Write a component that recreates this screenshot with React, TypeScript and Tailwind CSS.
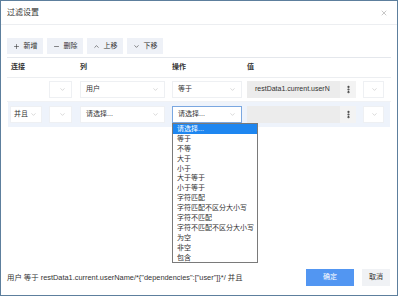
import { Plus, Minus, ChevronUp, ChevronDown, X, EllipsisVertical } from 'lucide-react';

const font = { fontFamily: '"Liberation Sans", "Noto Sans CJK SC", sans-serif' };

const ops = [
  '请选择...',
  '等于',
  '不等',
  '大于',
  '小于',
  '大于等于',
  '小于等于',
  '字符匹配',
  '字符匹配不区分大小写',
  '字符不匹配',
  '字符不匹配不区分大小写',
  '为空',
  '非空',
  '包含',
];

function Select({ label = '', className = '', focus = false }: { label?: string; className?: string; focus?: boolean }) {
  return (
    <div
      className={`flex items-center justify-between h-[17px] bg-white px-[5px] text-[7px] text-[#333] border ${
        focus ? 'border-[#7aa7e0]' : 'border-[#eef0f3]'
      } ${className}`}
    >
      <span className="whitespace-nowrap shrink-0">{label}</span>
      <ChevronDown size={7} className="text-[#aaa] shrink-0" strokeWidth={1.5} />
    </div>
  );
}

function ToolButton({ icon, label }: { icon: React.ReactNode; label: string }) {
  return (
    <button type="button" className="flex items-center gap-[4px] h-[16px] w-[36px] justify-center bg-[#eef1f7] text-[7px] text-[#333]">
      {icon}
      {label}
    </button>
  );
}

function ValueBox({ text = '' }: { text?: string }) {
  return (
    <div className="flex items-center w-[109px] h-[17px] ml-[5px] bg-[#ececec] text-[7px] text-[#333]">
      <span className="flex-1 pl-[8px] whitespace-nowrap overflow-hidden">{text}</span>
      <div className="w-[16px] h-full flex items-center justify-center bg-[#f3f3f3]">
        <EllipsisVertical size={9} strokeWidth={3.5} className="text-[#333]" />
      </div>
    </div>
  );
}

export default function App() {
  return (
    <div className="relative w-[398px] h-[296px] bg-white border border-[#5d7f9d] flex flex-col overflow-hidden" style={font}>
      <div className="flex items-center justify-between h-[24px] px-[6px] border-b border-[#eceef1]">
        <span className="text-[8px] text-[#333]">过滤设置</span>
        <X size={8} className="text-[#aaa] mr-[3px]" />
      </div>

      <div className="mx-[6px] pt-[13px] pb-[3px] flex gap-[4px] border-b border-[#e4e7ec]">
        <ToolButton icon={<Plus size={7} strokeWidth={2} />} label="新增" />
        <ToolButton icon={<Minus size={7} strokeWidth={2} />} label="删除" />
        <ToolButton icon={<ChevronUp size={7} strokeWidth={2} />} label="上移" />
        <ToolButton icon={<ChevronDown size={7} strokeWidth={2} />} label="下移" />
      </div>

      <div className="mx-[6px] grid grid-cols-[73px_92px_75px_116px_auto] items-center h-[20px] border-b border-[#eceef1] text-[7px] text-[#333] font-bold">
        <span className="pl-[4px]">连接</span>
        <span>列</span>
        <span>操作</span>
        <span>值</span>
        <span />
      </div>

      <div className="mx-[6px] flex items-center h-[24px] border-b border-[#f0f2f5]">
        <div className="w-[42px]" />
        <Select className="w-[23px]" />
        <Select label="用户" className="w-[85px] ml-[8px]" />
        <Select label="等于" className="w-[70px] ml-[7px]" />
        <ValueBox text="restData1.current.userN" />
        <Select className="w-[21px] ml-[7px]" />
      </div>

      <div className="relative mx-[7px] flex items-center h-[25px] bg-[#eef3fb]">
        <Select label="并且" className="w-[32px] ml-[2px] !px-[3px] !justify-start gap-[2px]" />
        <Select className="w-[23px] ml-[7px]" />
        <Select label="请选择..." className="w-[85px] ml-[8px]" />
        <Select label="请选择..." focus className="w-[70px] ml-[7px]" />
        <ValueBox />
        <Select className="w-[21px] ml-[7px]" />

        <ul className="absolute left-[164px] top-[21px] w-[86px] bg-white border border-[#7a7a7a] z-10 text-[7px] text-[#333]">
          {ops.map((o, i) => (
            <li
              key={o}
              className={`h-[9.9px] leading-[9.9px] px-[4px] whitespace-nowrap ${i === 0 ? 'bg-[#1e86f0] text-white' : ''}`}
            >
              {o}
            </li>
          ))}
        </ul>
      </div>

      <div className="mt-auto flex items-center justify-between pl-[6px] pr-[7px] pb-[9px]">
        <span className="text-[7.4px] text-[#333]">
          用户 等于 restData1.current.userName/*{'{"dependencies":["user"]}'}*/ 并且
        </span>
        <div className="flex gap-[8px]">
          <button type="button" className="w-[48px] h-[17px] bg-[#5296f2] text-white text-[7px]">确定</button>
          <button type="button" className="w-[28px] h-[17px] bg-[#f0f2f5] text-[#333] text-[7px]">取消</button>
        </div>
      </div>
    </div>
  );
}
